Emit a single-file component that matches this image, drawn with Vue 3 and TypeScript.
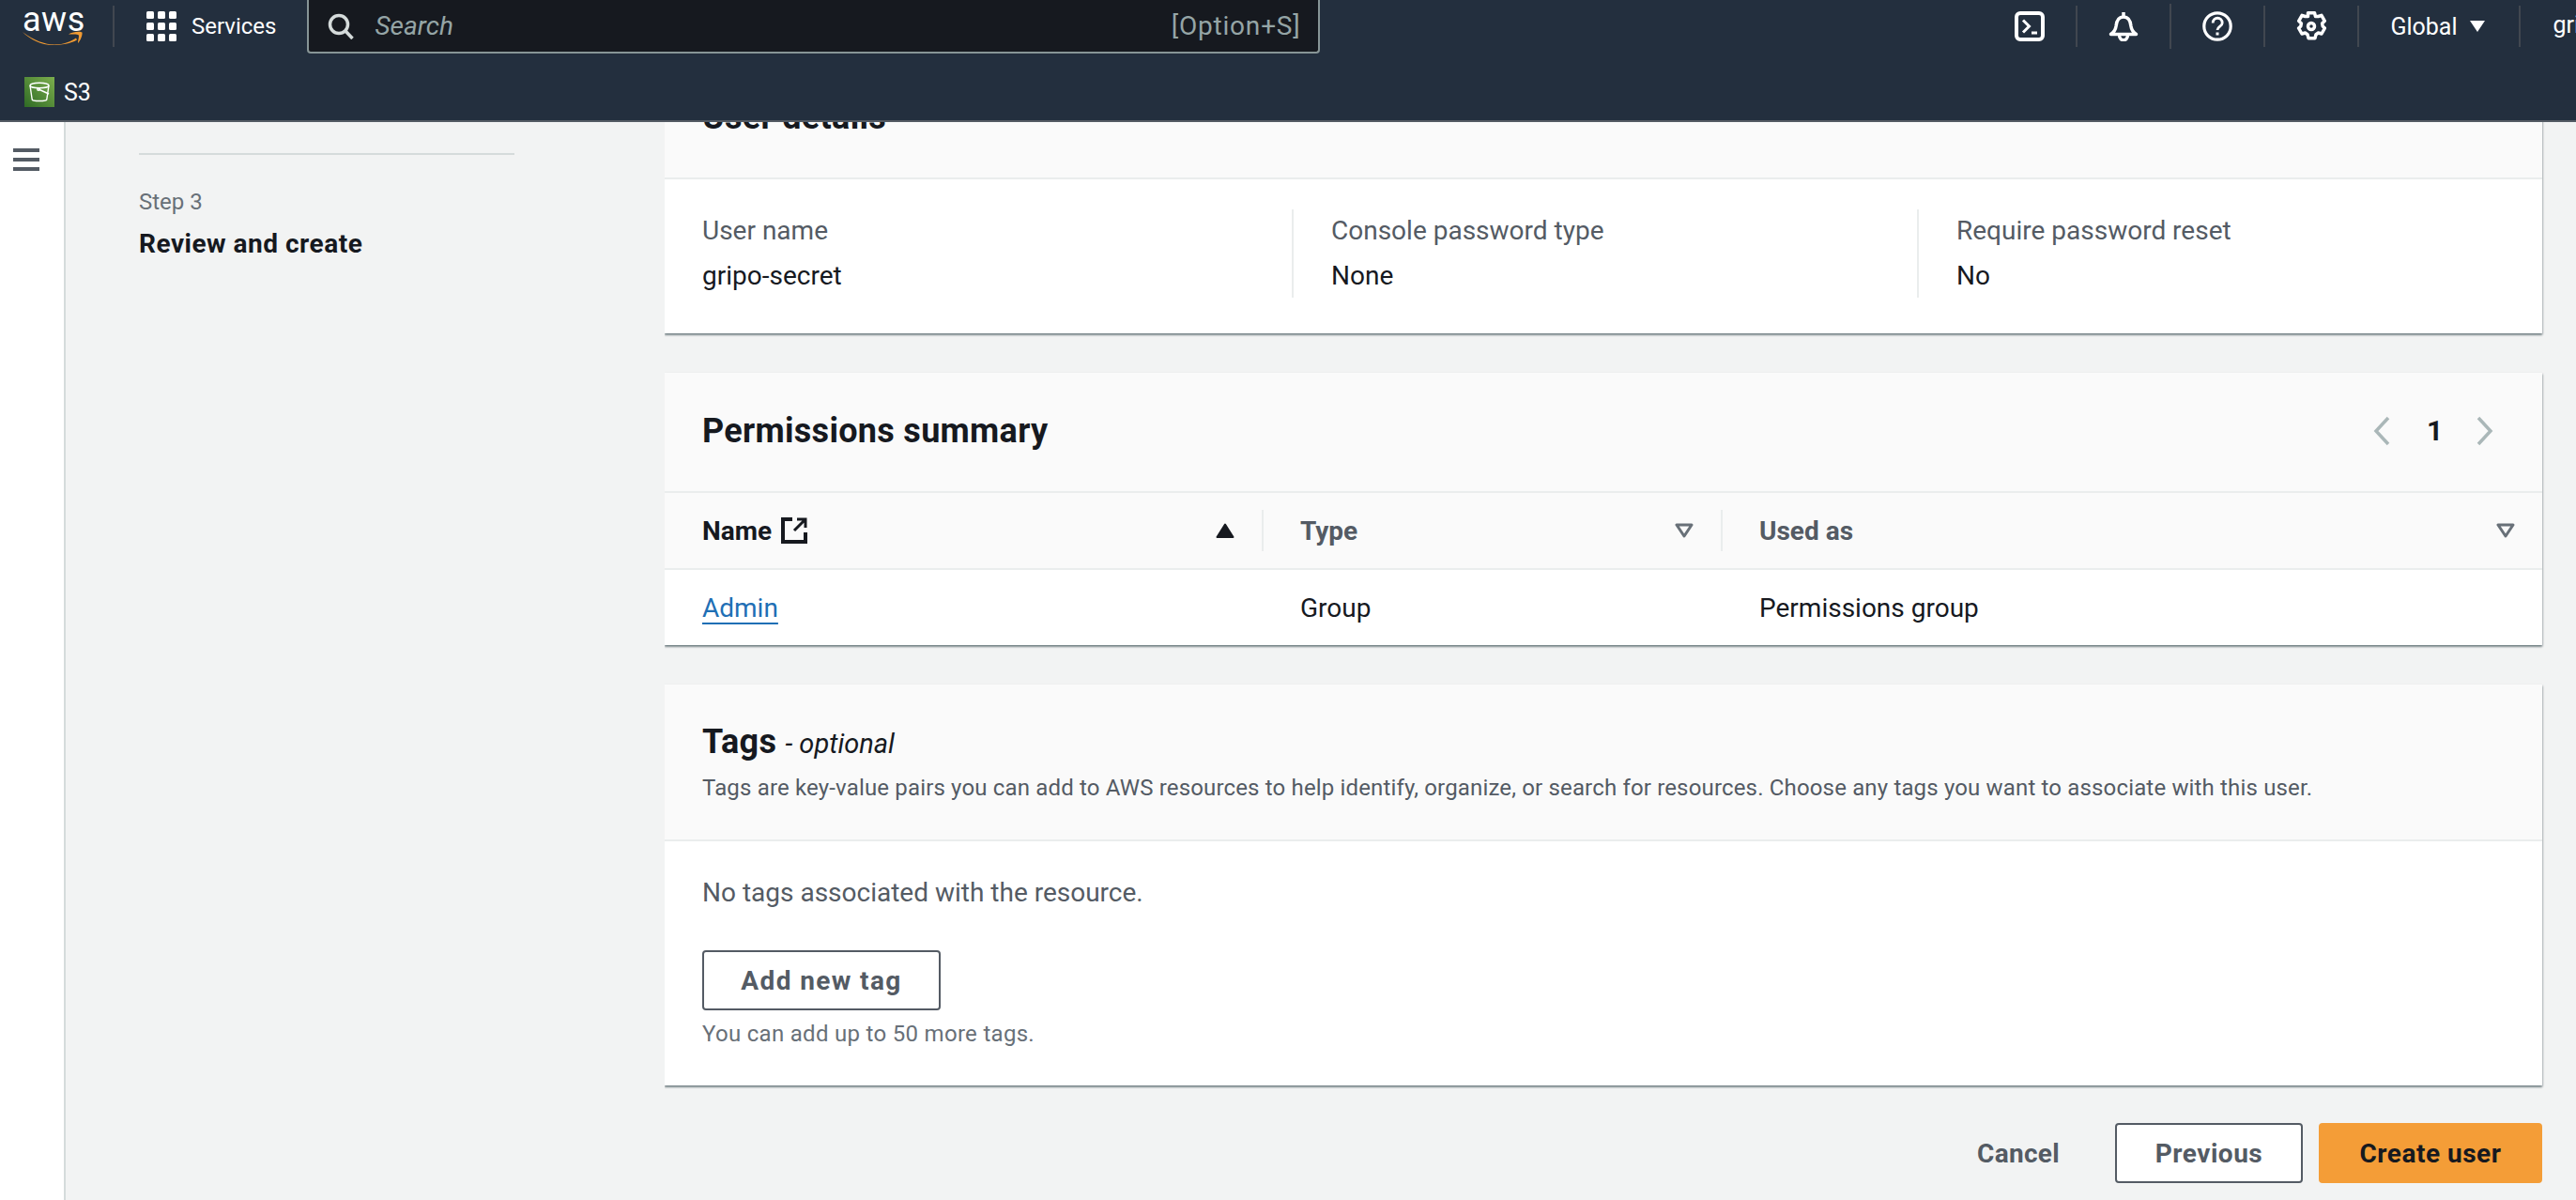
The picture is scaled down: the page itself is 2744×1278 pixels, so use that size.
<template>
  <div class="console">
    <header class="top-nav">
      <div class="nav-primary">
        <div class="logo-cell">
          <span class="aws-word">aws</span>
          <svg class="aws-smile" width="64" height="15" viewBox="0 0 64 15">
            <path fill="#f29b32" d="M0 1C12 10 24 14.500 34 14.500 44 14.500 52 11 57 7.500l1 2C51 13.500 42 15 32 15 20 15 8 9 0 1z" />
            <path fill="#f29b32" d="M49 3.500C53 1 61 0 63.500 1.500 64 4 62 10 59 13c0-2.500 1.500-7.500.8-8.500C59 3 53 3.500 49 3.500z" />
          </svg>
        </div>
        <div class="services">
          <svg width="32" height="32" viewBox="0 0 32 32" fill="#fff">
            <template v-for="row in [0, 12, 24]" :key="row">
              <rect v-for="col in [0, 12, 24]" :key="col" :x="col" :y="row" width="8" height="8" rx="1.500" />
            </template>
          </svg>
          <span>Services</span>
        </div>
        <div class="search">
          <svg width="28" height="28" viewBox="0 0 28 28" fill="none" stroke="#d5dbdb" stroke-width="3.500">
            <circle cx="12" cy="12" r="9.500" />
            <path d="M18.500 18.500L26.500 27" />
          </svg>
          <span class="search-text">Search</span>
          <span class="hotkey">[Option+S]</span>
        </div>
        <div class="nav-icons">
          <div class="icon-cell">
            <svg width="32" height="32" viewBox="0 0 32 32" fill="none" stroke="#fff" stroke-width="4">
              <rect x="2" y="2" width="28" height="28" rx="4" />
              <path stroke-width="3" d="M9 9.500l6.500 6.500L9 22.500M18 23h6" />
            </svg>
          </div>
          <div class="icon-cell tall">
            <svg width="32" height="32" viewBox="0 0 32 32" fill="none" stroke="#fff" stroke-width="3.500" stroke-linejoin="round">
              <path d="M2.500 24.500c3.500-2.500 5-4.500 5.500-8.500.5-5 2-10 8-10s7.500 5 8 10c.5 4 2 6 5.500 8.500z" />
              <path d="M16 1v5M11.500 25c0 7.500 9 7.500 9 0" />
            </svg>
          </div>
          <div class="icon-cell">
            <svg width="32" height="32" viewBox="0 0 32 32" fill="none" stroke="#fff" stroke-width="3.200">
              <circle cx="16" cy="16" r="14.200" />
              <path stroke-width="2.800" d="M11.200 12.500c0-7 10-7 10 0 0 3.500-5.200 3.800-5.200 7.500" />
              <path stroke-width="3" d="M16 22.500v3" />
            </svg>
          </div>
          <div class="icon-cell">
            <svg width="32" height="32" viewBox="0 0 32 32" fill="none" stroke="#fff" stroke-width="3.500" stroke-linejoin="round">
              <path d="M12.500 1.800h7l1 3.800 3-.1 3.400-1.200 3.400 6-2.700 2.700.6 3 2.200 2-3.400 6-3.500-1-2.500 1.700-1 4h-7l-1-4-2.500-1.700-3.500 1-3.400-6 2.200-2 .6-3L2.700 10.300l3.400-6 3.400 1.200 3-.1z" />
              <circle cx="16" cy="16" r="3.500" />
            </svg>
          </div>
          <div class="region">
            <span>Global</span>
            <svg width="16" height="12" viewBox="0 0 16 12" fill="#fff"><path d="M0 0h16L8 12z" /></svg>
          </div>
          <span class="account">gri</span>
        </div>
      </div>
      <div class="nav-secondary">
        <svg width="32" height="32" viewBox="0 0 32 32">
          <defs>
            <linearGradient id="s3fill" x1="0" y1="1" x2="1" y2="0">
              <stop offset="0" stop-color="#2f6b25" />
              <stop offset="1" stop-color="#7cae4d" />
            </linearGradient>
          </defs>
          <rect width="32" height="32" fill="url(#s3fill)" />
          <g fill="none" stroke="#fff" stroke-width="1.400">
            <ellipse cx="16" cy="9" rx="10" ry="2.800" />
            <path d="M6 9l2.200 15c.4 2 15.200 2 15.600 0L26 9" />
            <path d="M15 13l11 5" />
            <circle cx="15" cy="13" r="1.300" />
          </g>
        </svg>
        <span>S3</span>
      </div>
    </header>

    <div class="page">
      <aside class="side-rail">
        <div class="hamburger"><i></i><i></i><i></i></div>
      </aside>

      <nav class="steps">
        <div class="step-rule"></div>
        <div class="step-num">Step 3</div>
        <div class="step-title">Review and create</div>
      </nav>

      <main class="content">
        <div class="content-inner">
          <section class="card">
            <div class="card-head plain">
              <h2>User details</h2>
            </div>
            <div class="details">
              <div v-for="item in details" :key="item.label" class="detail">
                <div class="detail-label">{{ item.label }}</div>
                <div class="detail-value">{{ item.value }}</div>
              </div>
            </div>
          </section>

          <section class="card">
            <div class="card-head plain split">
              <h2>Permissions summary</h2>
              <div class="pager">
                <svg width="18" height="32" viewBox="0 0 18 32" fill="none" stroke="#aab7b8" stroke-width="3.500"><path d="M16 2L3 16l13 14" /></svg>
                <span>1</span>
                <svg width="18" height="32" viewBox="0 0 18 32" fill="none" stroke="#aab7b8" stroke-width="3.500"><path d="M2 2l13 14L2 30" /></svg>
              </div>
            </div>
            <div class="perm-grid perm-head">
              <div class="th active">
                <span class="th-label">
                  Name
                  <svg width="28" height="28" viewBox="0 0 28 28" fill="none" stroke="#16191f" stroke-width="4">
                    <path d="M12 2H2v24h24V16" />
                    <path stroke-width="3" d="M14 14L25 3M17 2h9v9" />
                  </svg>
                </span>
                <svg width="20" height="16" viewBox="0 0 20 16" fill="#16191f" stroke="#16191f" stroke-width="2" stroke-linejoin="round"><path d="M10 1.500L18.500 15h-17z" /></svg>
              </div>
              <div class="th">
                <span class="th-label">Type</span>
                <svg width="20" height="16" viewBox="0 0 20 16" fill="none" stroke="#687078" stroke-width="3" stroke-linejoin="round"><path d="M2 2h16l-8 12z" /></svg>
              </div>
              <div class="th">
                <span class="th-label">Used as</span>
                <svg width="20" height="16" viewBox="0 0 20 16" fill="none" stroke="#687078" stroke-width="3" stroke-linejoin="round"><path d="M2 2h16l-8 12z" /></svg>
              </div>
            </div>
            <div class="perm-grid perm-row">
              <div><a class="perm-link">Admin</a></div>
              <div>Group</div>
              <div>Permissions group</div>
            </div>
          </section>

          <section class="card">
            <div class="card-head tags-head">
              <h2>Tags <em>- optional</em></h2>
              <p>Tags are key-value pairs you can add to AWS resources to help identify, organize, or search for resources. Choose any tags you want to associate with this user.</p>
            </div>
            <div class="tags-body">
              <div class="no-tags">No tags associated with the resource.</div>
              <button class="btn add-tag">Add new tag</button>
              <div class="tags-hint">You can add up to 50 more tags.</div>
            </div>
          </section>

          <div class="actions">
            <span class="cancel">Cancel</span>
            <button class="btn previous">Previous</button>
            <button class="btn create">Create user</button>
          </div>
        </div>
      </main>
    </div>
  </div>
</template>

<script setup lang="ts">
const details = [
  { label: 'User name', value: 'gripo-secret' },
  { label: 'Console password type', value: 'None' },
  { label: 'Require password reset', value: 'No' }
]
</script>

<style>
html, body {
  margin: 0;
  background: #f2f3f3;
}
</style>

<style scoped>
.console {
  width: 2744px;
  height: 1278px;
  overflow: hidden;
  font-family: Roboto, "Noto Sans", sans-serif;
  font-size: 28px;
  color: #16191f;
  background: #f2f3f3;
}

.top-nav {
  height: 128px;
  background: #232f3e;
  border-bottom: 2px solid #545b64;
  color: #fff;
}

.nav-primary {
  display: flex;
  align-items: flex-start;
  height: 71px;
  overflow: hidden;
}

.logo-cell {
  position: relative;
  flex: none;
  width: 96px;
  height: 44px;
  margin-top: 6px;
  padding-left: 24px;
  border-right: 2px solid #414750;
}

.aws-word {
  display: block;
  font-size: 36px;
  line-height: 30px;
  letter-spacing: 0.5px;
}

.aws-smile {
  position: absolute;
  left: 24px;
  top: 27px;
}

.services {
  display: flex;
  align-items: center;
  gap: 16px;
  flex: none;
  height: 44px;
  margin: 6px 0 0 34px;
  font-size: 24px;
}

.search {
  display: flex;
  align-items: center;
  flex: none;
  box-sizing: border-box;
  width: 1079px;
  height: 57px;
  margin-left: 33px;
  padding: 0 19px 0 20px;
  background: #16191f;
  border: 2px solid #879596;
  border-top: none;
  border-radius: 0 0 4px 4px;
  color: #95a5a6;
}

.search-text {
  margin-left: 22px;
  font-style: italic;
}

.hotkey {
  margin-left: auto;
  letter-spacing: 0.8px;
}

.nav-icons {
  display: flex;
  align-items: flex-start;
  flex: none;
  margin-left: 707px;
}

.icon-cell {
  display: flex;
  align-items: center;
  justify-content: center;
  box-sizing: border-box;
  width: 100px;
  height: 44px;
  margin-top: 6px;
  border-right: 2px solid #414750;
}

.icon-cell.tall {
  height: 48px;
  margin-top: 4px;
}

.region {
  display: flex;
  align-items: center;
  gap: 13px;
  box-sizing: border-box;
  width: 172px;
  height: 44px;
  margin-top: 6px;
  padding-left: 33px;
  border-right: 2px solid #414750;
  font-size: 25px;
}

.account {
  margin: 12px 0 0 34px;
  font-size: 25px;
}

.nav-secondary {
  display: flex;
  align-items: center;
  gap: 10px;
  padding: 11px 0 0 26px;
  font-size: 25px;
}

.page {
  display: flex;
  height: 1148px;
}

.side-rail {
  flex: none;
  width: 68px;
  background: #fff;
  border-right: 2px solid #d5dbdb;
}

.hamburger {
  display: flex;
  flex-direction: column;
  gap: 6px;
  padding: 28px 0 0 14px;
}

.hamburger i {
  display: block;
  width: 28px;
  height: 4px;
  background: #545b64;
}

.steps {
  flex: none;
  box-sizing: border-box;
  width: 638px;
  padding: 33px 0 0 78px;
}

.step-rule {
  width: 400px;
  height: 2px;
  background: #d5dbdb;
}

.step-num {
  margin-top: 32px;
  font-size: 24px;
  line-height: 36px;
  color: #687078;
}

.step-title {
  margin-top: 7px;
  font-size: 28px;
  line-height: 40px;
  font-weight: 700;
  letter-spacing: 0.5px;
}

.content {
  flex: 1;
  min-width: 0;
  overflow: hidden;
}

.content-inner {
  margin-top: -67px;
  padding-right: 36px;
}

.card {
  margin-bottom: 42px;
  background: #fff;
  box-shadow: 0 2px 2px 0 rgba(0, 28, 36, 0.4), 1px 1px 2px 0 rgba(0, 28, 36, 0.15), -1px 1px 2px 0 rgba(0, 28, 36, 0.15);
}

section.card:last-of-type {
  margin-bottom: 40px;
}

.card-head {
  box-sizing: border-box;
  background: #fafafa;
  border-bottom: 2px solid #eaeded;
}

.card-head.plain {
  display: flex;
  align-items: center;
  height: 128px;
  padding: 0 40px 3px;
}

.card-head.split {
  justify-content: space-between;
  padding-right: 52px;
}

.card-head h2 {
  margin: 0;
  font-size: 36px;
  line-height: 44px;
  font-weight: 700;
  letter-spacing: 0.3px;
}

.details {
  display: grid;
  grid-template-columns: 668px 666px 1fr;
  padding: 32px 0 38px;
}

.detail {
  padding-left: 40px;
  line-height: 46px;
}

.detail + .detail {
  border-left: 2px solid #eaeded;
}

.detail-label {
  color: #545b64;
}

.detail-value {
  margin-top: 2px;
}

.pager {
  display: flex;
  align-items: center;
  gap: 39px;
  font-size: 30px;
  font-weight: 700;
}

.pager span {
  width: 14px;
}

.perm-grid {
  display: grid;
  grid-template-columns: 636px 489px 1fr;
}

.perm-head {
  height: 82px;
  box-sizing: border-box;
  align-items: center;
  background: #fafafa;
  border-bottom: 2px solid #eaeded;
}

.th {
  display: flex;
  align-items: center;
  justify-content: space-between;
  box-sizing: border-box;
  height: 44px;
  padding: 0 29px 0 40px;
  font-weight: 700;
  color: #545b64;
}

.th.active {
  color: #16191f;
}

.th + .th {
  padding-left: 39px;
  border-left: 2px solid #eaeded;
}

.th-label {
  display: flex;
  align-items: center;
  gap: 10px;
}

.perm-row {
  align-items: center;
  height: 80px;
}

.perm-row > div {
  padding-left: 41px;
}

.perm-row > div:first-child {
  padding-left: 40px;
}

.perm-link {
  color: #1f6fb5;
  text-decoration: underline;
  text-underline-offset: 6px;
  text-decoration-thickness: 2px;
}

.tags-head {
  padding: 39px 40px 28px;
}

.tags-head em {
  font-size: 29px;
  line-height: 1;
  font-weight: 400;
  letter-spacing: 0;
}

.tags-head p {
  margin: 0;
  font-size: 24px;
  line-height: 54px;
  letter-spacing: 0.16px;
  color: #545b64;
}

.tags-body {
  padding: 35px 40px 37px;
}

.no-tags {
  line-height: 40px;
  color: #545b64;
}

.btn {
  display: block;
  box-sizing: border-box;
  height: 64px;
  padding: 0;
  font-family: inherit;
  font-size: 28px;
  font-weight: 700;
  letter-spacing: 0.5px;
  color: #545b64;
  background: #fff;
  border: 2px solid #545b64;
  border-radius: 4px;
}

.add-tag {
  width: 254px;
  margin-top: 41px;
  letter-spacing: 1.400px;
}

.tags-hint {
  margin-top: 7px;
  font-size: 24px;
  line-height: 36px;
  letter-spacing: 0.3px;
  color: #687078;
}

.actions {
  display: flex;
  align-items: center;
  justify-content: flex-end;
}

.cancel {
  margin-right: 59px;
  font-weight: 700;
  letter-spacing: 0.3px;
  color: #545b64;
}

.previous {
  width: 200px;
  margin-right: 17px;
}

.create {
  width: 238px;
  color: #16191f;
  background: #f49d37;
  border-color: #f49d37;
}
</style>
